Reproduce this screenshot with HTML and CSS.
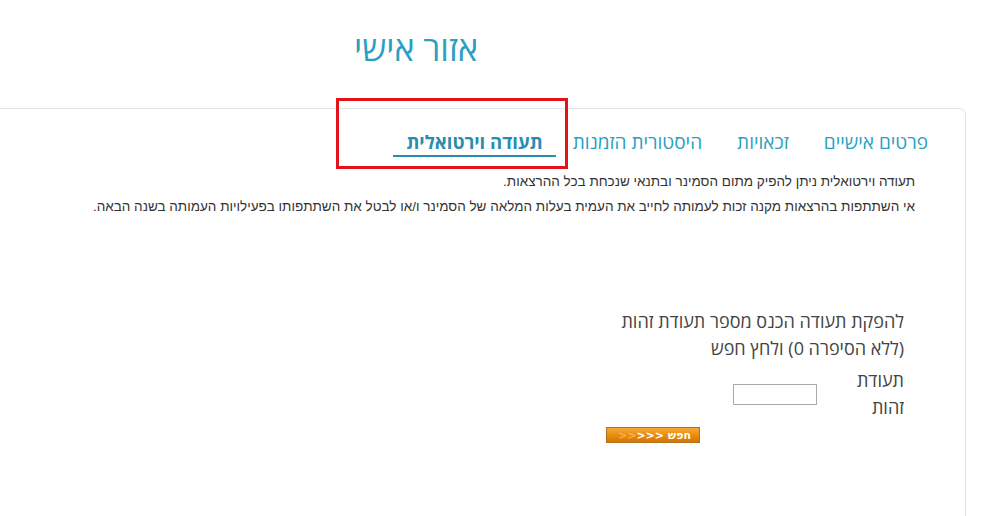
FILE: index.html
```html
<!DOCTYPE html>
<html lang="he" dir="rtl">
<head>
<meta charset="utf-8">
<link rel="stylesheet" href="styles.css">
</head>
<body>
<header class="page-head">
  <h1 class="page-title">אזור אישי</h1>
</header>
<section class="panel">
  <nav class="tabs">
    <a class="tab">פרטים אישיים</a>
    <a class="tab">זכאויות</a>
    <a class="tab">היסטורית הזמנות</a>
    <a class="tab active">תעודה וירטואלית</a>
    <span class="highlight"></span>
  </nav>
  <div class="info">
    <p>תעודה וירטואלית ניתן להפיק מתום הסמינר ובתנאי שנכחת בכל ההרצאות.</p>
    <p>אי השתתפות בהרצאות מקנה זכות לעמותה לחייב את העמית בעלות המלאה של הסמינר ו/או לבטל את השתתפותו בפעילויות העמותה בשנה הבאה.</p>
  </div>
  <form class="cert-form">
    <p class="instructions">להפקת תעודה הכנס מספר תעודת זהות<br>(ללא הסיפרה 0) ולחץ חפש</p>
    <div class="field">
      <label class="field-label">תעודת<br>זהות</label>
      <input class="field-input" type="text">
    </div>
    <button type="button" class="search-btn">חפש <span class="arrows">&lt;&lt;&lt;<span class="fade">&lt;&lt;</span></span></button>
  </form>
</section>
</body>
</html>
```

FILE: styles.css
```css
* { box-sizing: border-box; }
html, body { margin: 0; padding: 0; background: #fff; }
body {
  font-family: "Open Sans", "DejaVu Sans", sans-serif;
  color: #444;
  width: 992px;
  height: 516px;
  overflow: hidden;
}
.page-head {
  display: flex;
  justify-content: center;
  padding: 28px 160px 0 0;
  height: 108px;
}
.page-title {
  margin: 0;
  font-size: 34px;
  font-weight: 400;
  color: #2a9fc2;
  line-height: 40px;
}
.panel {
  margin: 0 26px 0 -10px;
  border: 1px solid #e2e2e2;
  border-left: none;
  border-radius: 0 7px 0 0;
  height: 430px;
}
.tabs {
  position: relative;
  display: flex;
  gap: 11px;
  padding: 21px 25px 0 0;
  height: 49px;
}
.tab {
  display: block;
  padding: 0 12px;
  font-size: 19px;
  line-height: 24px;
  height: 27px;
  color: #2a9fc2;
}
.tab.active {
  font-weight: 700;
  font-size: 18.5px;
  color: #2a8db0;
  border-bottom: 2px solid #2a8db0;
  margin-right: -6px;
  padding: 0 13px;
}
.highlight {
  position: absolute;
  top: -11px;
  left: 346px;
  width: 232px;
  height: 71px;
  border: 3px solid #e2141a;
}
.info {
  padding: 16px 50px 0 0;
  font-family: "Liberation Sans", Arial, sans-serif;
  font-size: 13.5px;
  color: #333;
}
.info p {
  margin: 0 0 9px;
  line-height: 16px;
}
.cert-form {
  padding: 84px 61px 0 0;
  width: 420px;
}
.instructions {
  margin: 0;
  font-size: 18px;
  line-height: 27px;
  color: #444;
  width: 310px;
}
.field {
  display: flex;
  align-items: center;
  gap: 38px;
  margin-top: 5px;
}
.field-label {
  font-size: 18px;
  line-height: 27px;
  width: 49px;
}
.field-input {
  width: 84px;
  height: 21px;
  border: 1px solid #a9a9a9;
  padding: 0;
}
.search-btn {
  display: block;
  margin: 6px 204px 0 0;
  width: 94px;
  height: 16px;
  padding: 0 8px 0 0;
  border: 1px solid #b3701a;
  background: linear-gradient(#f7a93a, #e88a0c 55%, #d27605);
  color: #fff;
  font-family: "DejaVu Sans", sans-serif;
  font-size: 11px;
  font-weight: 700;
  line-height: 13px;
  text-align: right;
  cursor: pointer;
}
.fade { color: #f7b04e; }
```
